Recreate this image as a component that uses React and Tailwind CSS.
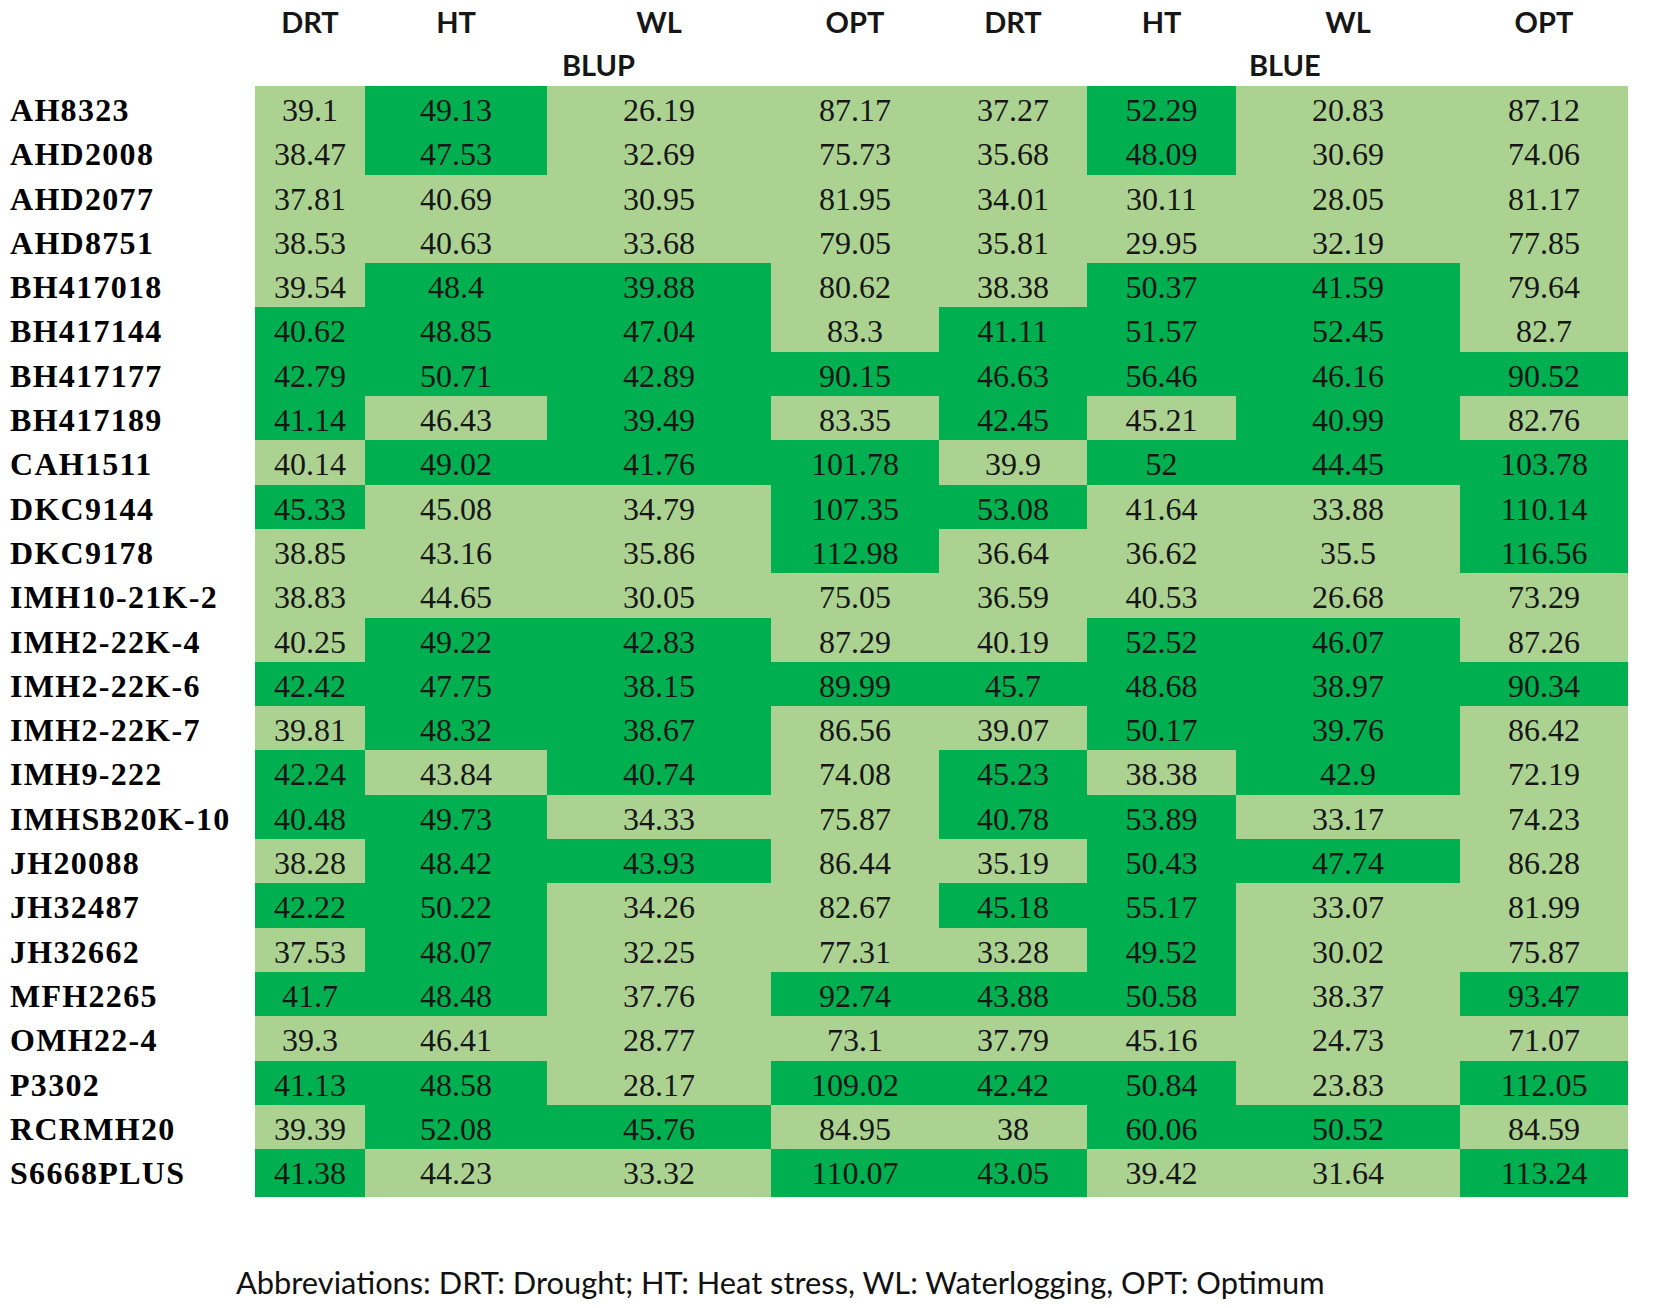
const cols = ['DRT', 'HT', 'WL', 'OPT', 'DRT', 'HT', 'WL', 'OPT'];

// each row: name, values, shading (D = dark green, L = light green)
const rows = [
  ['AH8323', ['39.1', '49.13', '26.19', '87.17', '37.27', '52.29', '20.83', '87.12'], 'LDLLLDLL'],
  ['AHD2008', ['38.47', '47.53', '32.69', '75.73', '35.68', '48.09', '30.69', '74.06'], 'LDLLLDLL'],
  ['AHD2077', ['37.81', '40.69', '30.95', '81.95', '34.01', '30.11', '28.05', '81.17'], 'LLLLLLLL'],
  ['AHD8751', ['38.53', '40.63', '33.68', '79.05', '35.81', '29.95', '32.19', '77.85'], 'LLLLLLLL'],
  ['BH417018', ['39.54', '48.4', '39.88', '80.62', '38.38', '50.37', '41.59', '79.64'], 'LDDLLDDL'],
  ['BH417144', ['40.62', '48.85', '47.04', '83.3', '41.11', '51.57', '52.45', '82.7'], 'DDDLDDDL'],
  ['BH417177', ['42.79', '50.71', '42.89', '90.15', '46.63', '56.46', '46.16', '90.52'], 'DDDDDDDD'],
  ['BH417189', ['41.14', '46.43', '39.49', '83.35', '42.45', '45.21', '40.99', '82.76'], 'DLDLDLDL'],
  ['CAH1511', ['40.14', '49.02', '41.76', '101.78', '39.9', '52', '44.45', '103.78'], 'LDDDLDDD'],
  ['DKC9144', ['45.33', '45.08', '34.79', '107.35', '53.08', '41.64', '33.88', '110.14'], 'DLLDDLLD'],
  ['DKC9178', ['38.85', '43.16', '35.86', '112.98', '36.64', '36.62', '35.5', '116.56'], 'LLLDLLLD'],
  ['IMH10-21K-2', ['38.83', '44.65', '30.05', '75.05', '36.59', '40.53', '26.68', '73.29'], 'LLLLLLLL'],
  ['IMH2-22K-4', ['40.25', '49.22', '42.83', '87.29', '40.19', '52.52', '46.07', '87.26'], 'LDDLLDDL'],
  ['IMH2-22K-6', ['42.42', '47.75', '38.15', '89.99', '45.7', '48.68', '38.97', '90.34'], 'DDDDDDDD'],
  ['IMH2-22K-7', ['39.81', '48.32', '38.67', '86.56', '39.07', '50.17', '39.76', '86.42'], 'LDDLLDDL'],
  ['IMH9-222', ['42.24', '43.84', '40.74', '74.08', '45.23', '38.38', '42.9', '72.19'], 'DLDLDLDL'],
  ['IMHSB20K-10', ['40.48', '49.73', '34.33', '75.87', '40.78', '53.89', '33.17', '74.23'], 'DDLLDDLL'],
  ['JH20088', ['38.28', '48.42', '43.93', '86.44', '35.19', '50.43', '47.74', '86.28'], 'LDDLLDDL'],
  ['JH32487', ['42.22', '50.22', '34.26', '82.67', '45.18', '55.17', '33.07', '81.99'], 'DDLLDDLL'],
  ['JH32662', ['37.53', '48.07', '32.25', '77.31', '33.28', '49.52', '30.02', '75.87'], 'LDLLLDLL'],
  ['MFH2265', ['41.7', '48.48', '37.76', '92.74', '43.88', '50.58', '38.37', '93.47'], 'DDLDDDLD'],
  ['OMH22-4', ['39.3', '46.41', '28.77', '73.1', '37.79', '45.16', '24.73', '71.07'], 'LLLLLLLL'],
  ['P3302', ['41.13', '48.58', '28.17', '109.02', '42.42', '50.84', '23.83', '112.05'], 'DDLDDDLD'],
  ['RCRMH20', ['39.39', '52.08', '45.76', '84.95', '38', '60.06', '50.52', '84.59'], 'LDDLLDDL'],
  ['S6668PLUS', ['41.38', '44.23', '33.32', '110.07', '43.05', '39.42', '31.64', '113.24'], 'DLLDDLLD'],
];

const grid = 'grid grid-cols-[255px_110px_182px_224px_168px_148px_149px_224px_168px]';

export default function App() {
  return (
    <div className="w-[1654px] h-[1308px] bg-white text-[#161616]">
      {/* column heads */}
      <div className={`${grid} h-[43px] items-center font-['Lato',sans-serif]`}>
        <div />
        {cols.map((c, i) => (
          <div key={i} className="text-center text-[29px] font-bold">{c}</div>
        ))}
      </div>
      <div className={`${grid} h-[43px] items-center font-['Lato',sans-serif]`}>
        <div />
        <div />
        <div />
        <div className="pl-[15px] text-[29px] font-bold">BLUP</div>
        <div />
        <div />
        <div />
        <div className="pl-[13px] text-[29px] font-bold">BLUE</div>
        <div />
      </div>

      {/* table body */}
      <div>
        {rows.map(([name, vals, shade]) => (
          <div key={name} className={`${grid} h-[44.3px]`}>
            <div className="flex items-center pl-[10px] font-['Liberation_Serif',serif] text-[32px] font-bold tracking-[1.3px] text-black">
              {name}
            </div>
            {vals.map((v, i) => (
              <div
                key={i}
                className={`flex items-center justify-center font-['Liberation_Serif',serif] text-[32px] ${shade[i] === 'D' ? 'bg-[#00b050]' : 'bg-[#acd291]'}`}
              >
                {v}
              </div>
            ))}
          </div>
        ))}
      </div>

      <div className="pl-[236px] pt-[67px] font-['Lato',sans-serif] text-[30.8px] text-[#111]">
        Abbreviations: DRT: Drought; HT: Heat stress, WL: Waterlogging, OPT: Optimum
      </div>
    </div>
  );
}
